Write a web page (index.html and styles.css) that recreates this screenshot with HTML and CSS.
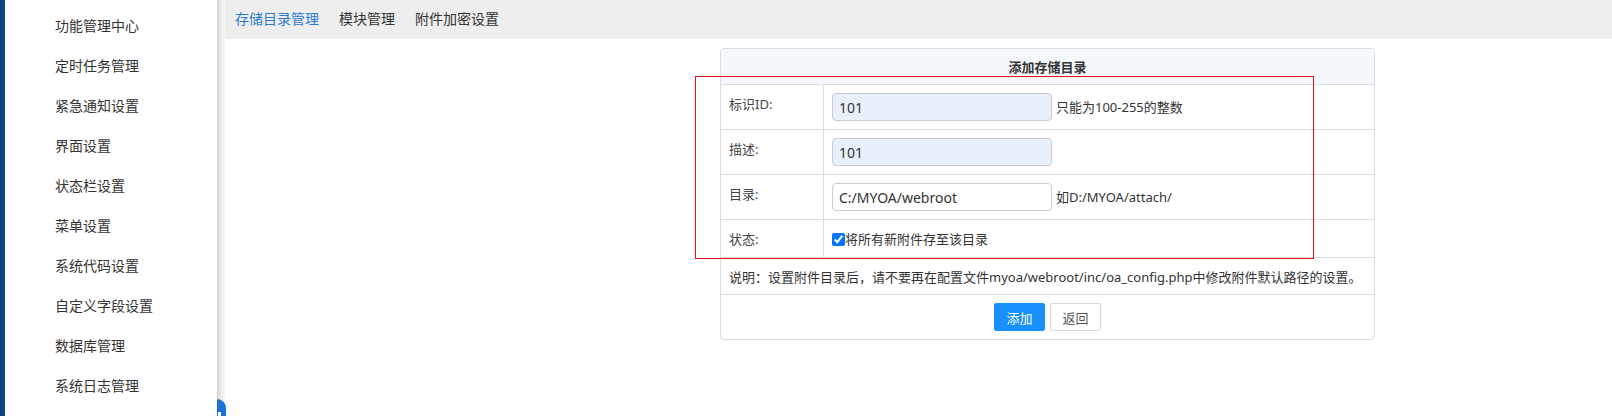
FILE: index.html
```html
<!DOCTYPE html>
<html lang="zh-CN">
<head>
<meta charset="utf-8">
<title>存储目录管理</title>
<link rel="stylesheet" href="styles.css">
</head>
<body>
<div class="page">
  <aside class="sidebar">
    <ul class="menu">
      <li>功能管理中心</li>
      <li>定时任务管理</li>
      <li>紧急通知设置</li>
      <li>界面设置</li>
      <li>状态栏设置</li>
      <li>菜单设置</li>
      <li>系统代码设置</li>
      <li>自定义字段设置</li>
      <li>数据库管理</li>
      <li>系统日志管理</li>
    </ul>
  </aside>
  <div class="shade"></div>
  <div class="toggle"><span class="toggle-dot"></span></div>
  <main class="main">
    <nav class="tabs">
      <span class="tab active">存储目录管理</span>
      <span class="tab">模块管理</span>
      <span class="tab">附件加密设置</span>
    </nav>
    <section class="panel">
      <div class="panel-head">添加存储目录</div>
      <div class="row">
        <div class="lbl">标识ID:</div>
        <div class="val"><input class="inp filled" type="text" value="101"><span class="hint">只能为100-255的整数</span></div>
      </div>
      <div class="row">
        <div class="lbl">描述:</div>
        <div class="val"><input class="inp filled" type="text" value="101"></div>
      </div>
      <div class="row">
        <div class="lbl">目录:</div>
        <div class="val"><input class="inp" type="text" value="C:/MYOA/webroot"><span class="hint">如D:/MYOA/attach/</span></div>
      </div>
      <div class="row row-check">
        <div class="lbl">状态:</div>
        <div class="val"><label class="chk"><input type="checkbox" checked>将所有新附件存至该目录</label></div>
      </div>
      <div class="note">说明：设置附件目录后，请不要再在配置文件myoa/webroot/inc/oa_config.php中修改附件默认路径的设置。</div>
      <div class="actions">
        <button class="btn btn-primary" type="button">添加</button>
        <button class="btn btn-default" type="button">返回</button>
      </div>
    </section>
  </main>
  <div class="mark"></div>
</div>
</body>
</html>
```

FILE: styles.css
```css
* { box-sizing: border-box; }
html, body { margin: 0; padding: 0; }
body {
  font-family: "Noto Sans", "Noto Sans CJK SC", sans-serif;
  color: #333;
  background: #fff;
  overflow: hidden;
}
.page {
  position: relative;
  display: flex;
  height: 416px;
  width: 1612px;
}
.sidebar {
  width: 217px;
  flex: 0 0 217px;
  border-left: 5px solid #0a4485;
  background: #fff;
}
.menu {
  list-style: none;
  margin: 0;
  padding: 6px 0 0 0;
}
.menu li {
  height: 40px;
  line-height: 40px;
  padding-left: 50px;
  font-size: 14px;
  color: #333;
}
.shade {
  width: 8px;
  flex: 0 0 8px;
  background: linear-gradient(to right, #d3d3d3, #eeeeee 60%, #f8f8f8);
}
.toggle {
  position: absolute;
  left: 217px;
  top: 399px;
  width: 9px;
  height: 26px;
  background: #1a73d8;
  border-radius: 0 13px 13px 0;
}
.toggle-dot {
  position: absolute;
  left: 1px;
  top: 13px;
  width: 3px;
  height: 6px;
  background: #fff;
}
.main {
  flex: 1;
  min-width: 0;
}
.tabs {
  height: 39px;
  background: #eeeeee;
  display: flex;
  gap: 20px;
  padding-left: 10px;
  line-height: 38px;
  font-size: 14px;
}
.tab { color: #333; }
.tab.active { color: #2a7bd3; }
.panel {
  margin: 9px 0 0 495px;
  width: 655px;
  border: 1px solid #dddddd;
  border-radius: 4px;
  overflow: hidden;
  font-size: 13px;
}
.panel-head {
  height: 36px;
  padding: 8px;
  line-height: 20px;
  text-align: center;
  font-weight: bold;
  background: #f4f8fd;
  border-bottom: 1px solid #dddddd;
  color: #333;
}
.row {
  display: flex;
  border-bottom: 1px solid #dddddd;
}
.lbl {
  width: 103px;
  flex: 0 0 103px;
  padding: 9px 8px 7px 8px;
  line-height: 20px;
  border-right: 1px solid #dddddd;
  color: #444;
}
.val {
  flex: 1;
  padding: 8px;
  display: flex;
  align-items: center;
  line-height: 20px;
}
.row-check .val { line-height: 21px; padding: 9px 8px 7px 8px; }
.row-check .lbl { line-height: 21px; }
.inp {
  width: 220px;
  height: 28px;
  border: 1px solid #cccccc;
  border-radius: 4px;
  padding: 0 6px;
  font-family: "Noto Sans", "Noto Sans CJK SC", sans-serif;
  font-size: 14px;
  color: #333;
  background: #fff;
  margin: 0;
}
.inp.filled { background: #e8f0fe; }
.hint {
  margin-left: 4px;
  color: #333;
}
.chk {
  display: flex;
  align-items: center;
}
.chk input {
  width: 13px;
  height: 13px;
  margin: 0;
}
.note {
  padding: 9px 8px 7px 8px;
  line-height: 20px;
  border-bottom: 1px solid #dddddd;
  color: #333;
}
.actions {
  display: flex;
  justify-content: center;
  gap: 5px;
  padding: 8px;
}
.btn {
  width: 51px;
  height: 28px;
  font-family: "Noto Sans", "Noto Sans CJK SC", sans-serif;
  font-size: 13px;
  border-radius: 2px;
  padding: 0;
  cursor: pointer;
}
.btn-primary {
  background: #1890ff;
  border: 1px solid #1890ff;
  color: #fff;
}
.btn-default {
  background: #fff;
  border: 1px solid #d9d9d9;
  color: #555;
}
.mark {
  position: absolute;
  left: 695px;
  top: 76px;
  width: 619px;
  height: 183px;
  border: 1px solid #e3141c;
  pointer-events: none;
}
```
